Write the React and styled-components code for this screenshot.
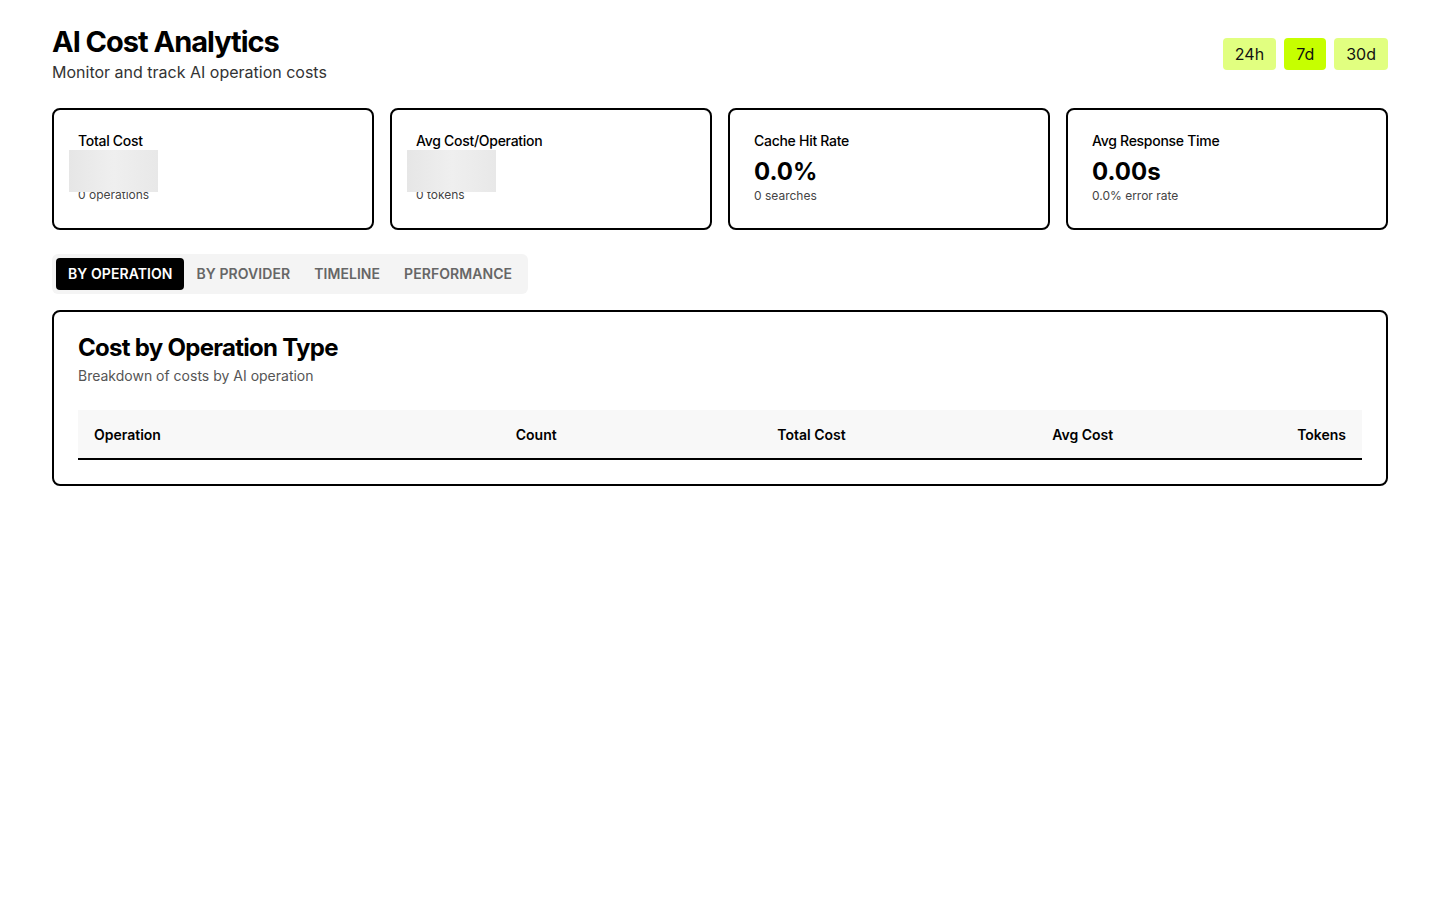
import React, { useState } from 'react';
import styled, { createGlobalStyle } from 'styled-components';

const GlobalStyle = createGlobalStyle`
  * { box-sizing: border-box; }
  body {
    margin: 0;
    background: #fff;
    color: #000;
    font-family: Inter, "Noto Sans", sans-serif;
  }
`;

const Page = styled.div`
  padding: 24px 52px 40px;
`;

const Header = styled.header`
  display: flex;
  justify-content: space-between;
  align-items: center;
  margin-bottom: 24px;
`;

const Title = styled.h1`
  margin: 0;
  font-size: 29px;
  line-height: 36px;
  font-weight: 700;
  letter-spacing: -0.035em;
`;

const Subtitle = styled.p`
  margin: 0;
  font-size: 16px;
  line-height: 24px;
  color: #333;
`;

const RangeGroup = styled.div`
  display: flex;
  gap: 8px;
`;

const RangeButton = styled.button`
  height: 32px;
  padding: 0 12px;
  border: none;
  border-radius: 4px;
  font-family: inherit;
  font-size: 16px;
  color: #111;
  background: ${(p) => (p.$active ? '#c6ff00' : '#e1ff80')};
  cursor: pointer;
`;

const StatsGrid = styled.div`
  display: grid;
  grid-template-columns: repeat(4, 1fr);
  gap: 16px;
  margin-bottom: 24px;
`;

const StatCard = styled.div`
  height: 122px;
  border: 2px solid #000;
  border-radius: 8px;
  padding: 21px 24px;
  display: flex;
  flex-direction: column;
`;

const StatLabel = styled.div`
  font-size: 14px;
  line-height: 20px;
  font-weight: 500;
  letter-spacing: -0.02em;
  margin-bottom: 5px;
`;

const StatValue = styled.div`
  font-size: 24px;
  line-height: 32px;
  font-weight: 700;
`;

/* loading placeholder, drawn a little larger than the value it replaces */
const Skeleton = styled.div`
  position: relative;
  z-index: 1;
  width: 89px;
  height: 42px;
  margin: -6px 0 -5px -9px;
  background: linear-gradient(90deg, #e6e6e6 0%, #efefef 50%, #e8e8e8 100%);
`;

const StatSub = styled.div`
  font-size: 12px;
  line-height: 16px;
  color: #444;
`;

const TabList = styled.div`
  display: inline-flex;
  padding: 4px;
  background: #f4f4f4;
  border-radius: 6px;
  margin-bottom: 16px;
`;

const Tab = styled.button`
  border: none;
  border-radius: 4px;
  padding: 6px 12px;
  font-family: inherit;
  font-size: 14px;
  line-height: 20px;
  font-weight: 600;
  letter-spacing: 0.005em;
  text-transform: uppercase;
  background: ${(p) => (p.$active ? '#000' : 'transparent')};
  color: ${(p) => (p.$active ? '#fff' : '#666')};
  cursor: pointer;
`;

const Panel = styled.section`
  border: 2px solid #000;
  border-radius: 8px;
  padding: 20px 24px 24px;
`;

const PanelTitle = styled.h2`
  margin: 0 0 2px;
  font-size: 24px;
  line-height: 32px;
  font-weight: 700;
  letter-spacing: -0.03em;
`;

const PanelSub = styled.p`
  margin: 0 0 24px;
  font-size: 14px;
  line-height: 20px;
  color: #555;
`;

const Table = styled.table`
  width: 100%;
  border-collapse: collapse;
`;

const HeadRow = styled.tr`
  background: #f8f8f8;
  border-bottom: 2px solid #000;
`;

const Th = styled.th`
  padding: 15px 16px 13px;
  font-size: 14px;
  line-height: 20px;
  font-weight: 600;
  text-align: ${(p) => (p.$right ? 'right' : 'left')};
`;

const stats = [
  { label: 'Total Cost', value: null, sub: '0 operations' },
  { label: 'Avg Cost/Operation', value: null, sub: '0 tokens' },
  { label: 'Cache Hit Rate', value: '0.0%', sub: '0 searches' },
  { label: 'Avg Response Time', value: '0.00s', sub: '0.0% error rate' },
];

const tabs = ['By Operation', 'By Provider', 'Timeline', 'Performance'];

export default function App() {
  const [range, setRange] = useState('7d');
  const [tab, setTab] = useState(0);

  return (
    <>
      <GlobalStyle />
      <Page>
        <Header>
          <div>
            <Title>AI Cost Analytics</Title>
            <Subtitle>Monitor and track AI operation costs</Subtitle>
          </div>
          <RangeGroup>
            {['24h', '7d', '30d'].map((r) => (
              <RangeButton key={r} $active={range === r} onClick={() => setRange(r)}>
                {r}
              </RangeButton>
            ))}
          </RangeGroup>
        </Header>

        <StatsGrid>
          {stats.map((s) => (
            <StatCard key={s.label}>
              <StatLabel>{s.label}</StatLabel>
              {s.value ? <StatValue>{s.value}</StatValue> : <Skeleton />}
              <StatSub>{s.sub}</StatSub>
            </StatCard>
          ))}
        </StatsGrid>

        <TabList>
          {tabs.map((t, i) => (
            <Tab key={t} $active={tab === i} onClick={() => setTab(i)}>
              {t}
            </Tab>
          ))}
        </TabList>

        <Panel>
          <PanelTitle>Cost by Operation Type</PanelTitle>
          <PanelSub>Breakdown of costs by AI operation</PanelSub>
          <Table>
            <thead>
              <HeadRow>
                <Th>Operation</Th>
                <Th $right>Count</Th>
                <Th $right>Total Cost</Th>
                <Th $right>Avg Cost</Th>
                <Th $right>Tokens</Th>
              </HeadRow>
            </thead>
            <tbody />
          </Table>
        </Panel>
      </Page>
    </>
  );
}
